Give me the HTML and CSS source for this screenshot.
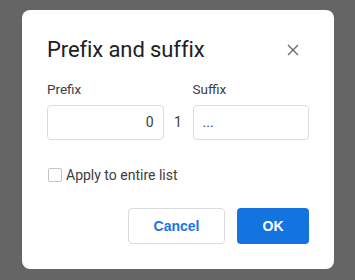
FILE: index.html
```html
<!DOCTYPE html>
<html>
<head>
<meta charset="utf-8">
<link rel="stylesheet" href="styles.css">
</head>
<body>
<div class="overlay">
  <div class="dialog">
    <div class="header">
      <div class="title">Prefix and suffix</div>
      <div class="close" aria-label="Close">
        <svg width="12" height="12" viewBox="0 0 12 12"><path d="M1 1L11 11M11 1L1 11" stroke="#6b6b6b" stroke-width="1.4" fill="none"/></svg>
      </div>
    </div>
    <div class="fields">
      <div class="field">
        <div class="label">Prefix</div>
        <div class="input right">0</div>
      </div>
      <div class="mid">1</div>
      <div class="field">
        <div class="label">Suffix</div>
        <div class="input">...</div>
      </div>
    </div>
    <label class="check"><span class="box"></span><span>Apply to entire list</span></label>
    <div class="actions">
      <button class="btn cancel">Cancel</button>
      <button class="btn ok">OK</button>
    </div>
  </div>
</div>
</body>
</html>
```
FILE: styles.css
```css
html, body { margin: 0; padding: 0; }
body { background: #656565; font-family: Roboto, "Liberation Sans", sans-serif; }
.overlay { width: 355px; height: 280px; padding: 10px 22px; box-sizing: border-box; }
.dialog { width: 312px; height: 259px; background: #fff; border-radius: 8px; box-sizing: border-box; padding: 26px 25px 0 25px; }
.header { display: flex; justify-content: space-between; align-items: center; height: 28px; }
.title { font-size: 22px; color: #202124; line-height: 28px; letter-spacing: -0.1px; }
.close { width: 12px; height: 12px; margin-right: 10px; display: flex; }
.fields { display: flex; align-items: flex-end; margin-top: 17px; }
.field { flex: 1; }
.label { font-size: 13.5px; color: #3c4043; line-height: 16px; margin-bottom: 8px; }
.input { height: 35px; border: 1px solid #dadce0; border-radius: 4px; box-sizing: border-box; font-size: 14px; color: #3c4043; line-height: 33px; padding: 0 9px; }
.input.right { text-align: right; }
.mid { width: 29px; text-align: center; font-size: 14px; color: #3c4043; line-height: 35px; height: 35px; }
.check { display: flex; align-items: center; margin-top: 27px; font-size: 14px; color: #3c4043; }
.box { width: 12px; height: 12px; border: 1px solid #c4c4c4; border-radius: 2px; margin: 0 4px 0 1px; }
.actions { display: flex; justify-content: flex-end; gap: 12px; margin-top: 25px; }
.btn { height: 36px; border-radius: 4px; font-family: "Liberation Sans", Arial, sans-serif; font-weight: bold; font-size: 14px; cursor: pointer; }
.cancel { width: 97px; background: #fff; border: 1px solid #dadce0; color: #1a73e8; }
.ok { width: 72px; background: #1374e0; border: none; color: #fff; }
```
